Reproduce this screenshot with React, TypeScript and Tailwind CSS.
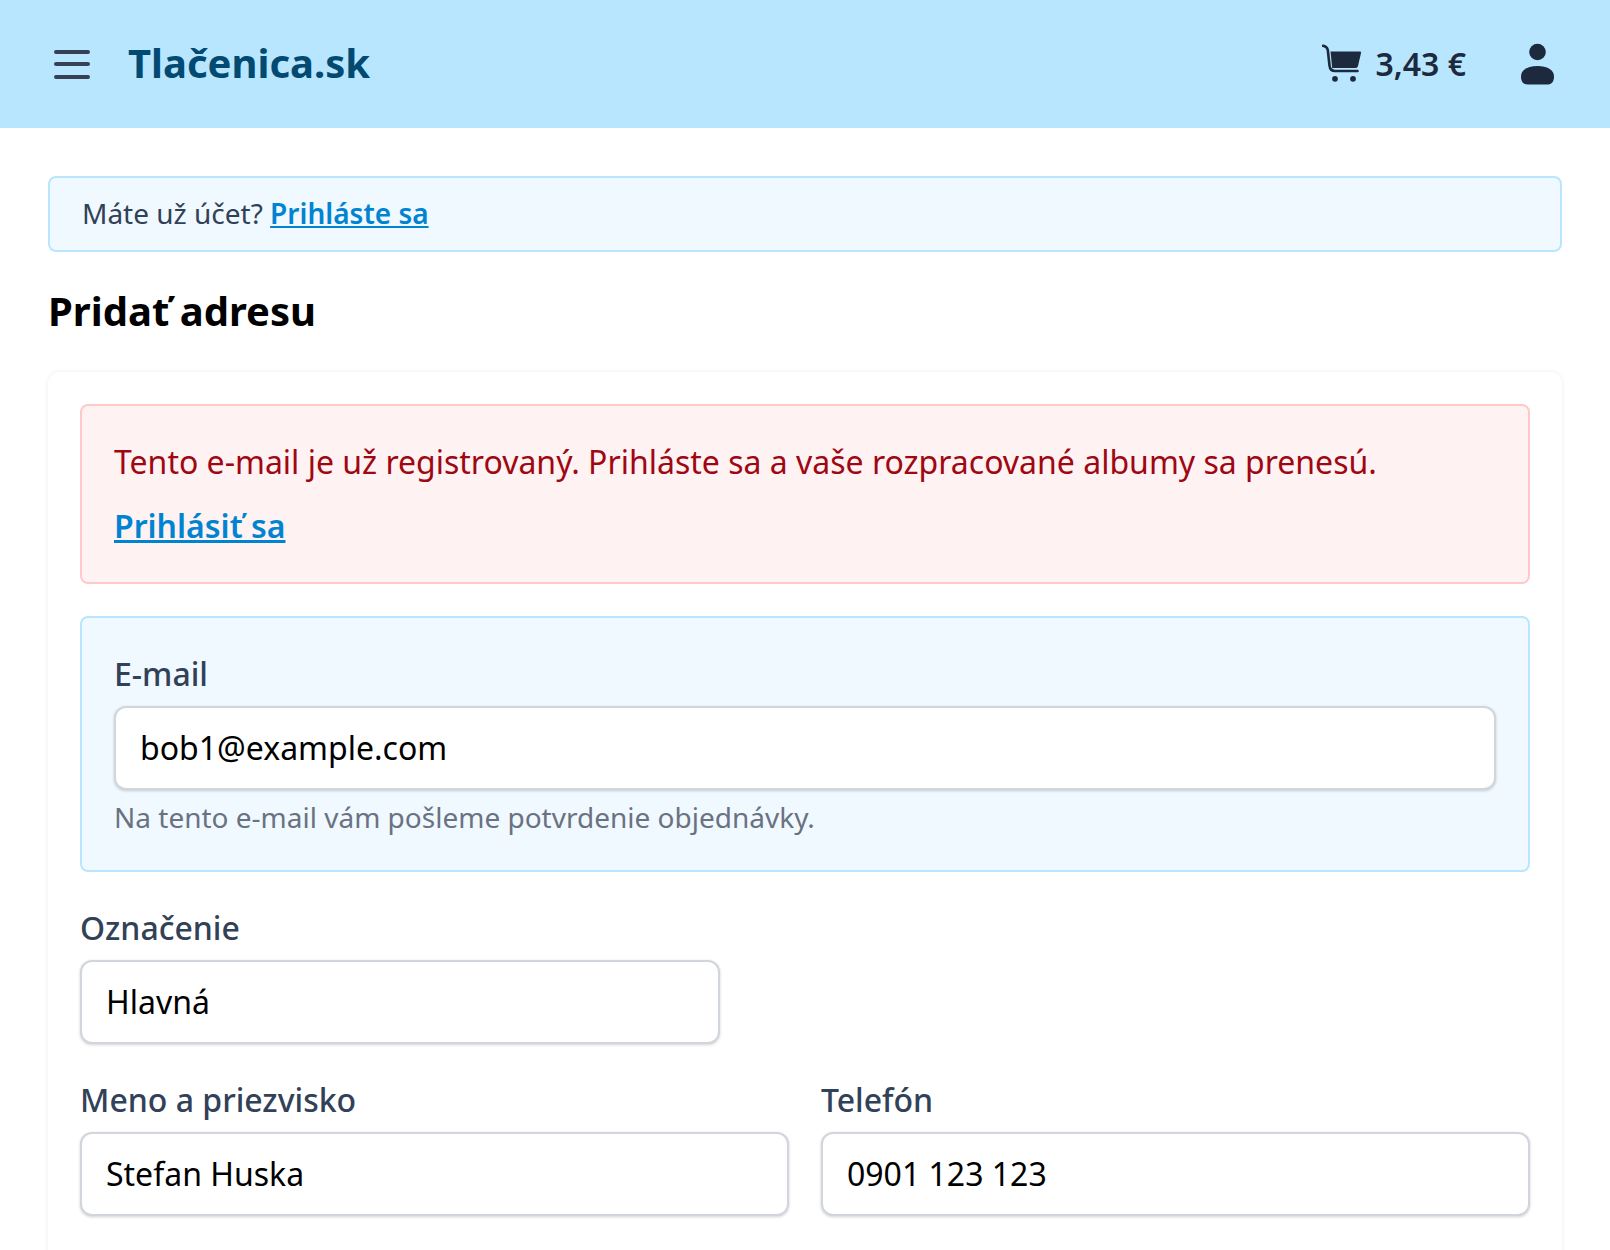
import React from 'react';

const CartIcon = () => (
  <svg width="40" height="40" viewBox="0 0 40 40" className="text-slate-800">
    <path d="M1 1.800c2.800.4 4.300 1.800 4.800 4.200l1.700 15.500c.4 3.500 2.200 5.500 5.500 5.500h22.500" fill="none" stroke="currentColor" strokeWidth="2.600" strokeLinecap="round" />
    <path d="M8.500 7.500h29.300c1 0 1.400.6 1.200 1.600l-3 13c-.3 1.200-1 1.800-2.200 1.800H10.200z" fill="currentColor" />
    <circle cx="13" cy="34.800" r="2.900" fill="currentColor" />
    <circle cx="31" cy="34.800" r="2.900" fill="currentColor" />
  </svg>
);

const UserIcon = () => (
  <svg width="33" height="42" viewBox="0 0 33 42" className="text-slate-800">
    <circle cx="16.500" cy="9" r="8.300" fill="currentColor" />
    <path d="M16.500 23c9.500 0 16.500 3.800 16.500 10.500 0 5.500-2.500 8-7 8H7c-4.500 0-7-2.500-7-8C0 26.800 7 23 16.500 23z" fill="currentColor" />
  </svg>
);

const Field = ({ label, value, className = '' }: { label: string; value: string; className?: string }) => (
  <div className={className}>
    <label className="block text-[32px] leading-[48px] font-medium text-slate-700 mb-2">{label}</label>
    <div className="h-[84px] flex items-center px-6 bg-white border-2 border-gray-300 rounded-[12px] shadow-[0_1px_3px_rgba(0,0,0,0.18)] text-[32px] text-black">
      {value}
    </div>
  </div>
);

export default function App() {
  return (
    <div className="h-[1250px] overflow-hidden bg-white font-['Noto_Sans',sans-serif]">
      <header className="h-32 bg-sky-200 flex items-center pl-[54px] pr-14">
        <div className="w-9 flex flex-col gap-[8.500px]">
          <span className="block h-1 rounded-full bg-gray-700" />
          <span className="block h-1 rounded-full bg-gray-700" />
          <span className="block h-1 rounded-full bg-gray-700" />
        </div>
        <a className="ml-[38px] mb-[3px] text-[40px] leading-none font-bold text-sky-900">Tlačenica.sk</a>
        <div className="ml-auto flex items-center gap-[14px]">
          <CartIcon />
          <span className="mb-[1px] text-[32px] font-semibold text-slate-800">3,43 €</span>
        </div>
        <div className="ml-[55px]">
          <UserIcon />
        </div>
      </header>

      <main className="px-12 pt-12">
        <div className="h-[76px] flex items-center px-8 pb-[2px] bg-sky-50 border-2 border-sky-200 rounded-[8px] text-[28px] text-slate-700">
          <span>Máte už účet?&nbsp;</span>
          <a className="font-semibold text-sky-600 underline">Prihláste sa</a>
        </div>

        <h1 className="mt-[31px] text-[40px] leading-[56px] font-bold text-black">Pridať adresu</h1>

        <section className="mt-[33px] bg-white rounded-[12px] shadow-[0_0_5px_rgba(0,0,0,0.08)] p-8 pb-[200px]">
          <div className="h-[180px] px-8 pt-8 bg-red-50 border-2 border-red-200 rounded-[8px]">
            <p className="text-[32px] leading-[48px] text-red-800">
              Tento e-mail je už registrovaný. Prihláste sa a vaše rozpracované albumy sa prenesú.
            </p>
            <a className="block mt-4 text-[32px] leading-[48px] font-semibold text-sky-600 underline">Prihlásiť sa</a>
          </div>

          <div className="mt-8 p-8 bg-sky-50 border-2 border-sky-200 rounded-[8px]">
            <Field label="E-mail" value="bob1@example.com" />
            <p className="mt-[6px] text-[28px] leading-[42px] text-gray-500">Na tento e-mail vám pošleme potvrdenie objednávky.</p>
          </div>

          <Field label="Označenie" value="Hlavná" className="mt-8 w-[640px]" />

          <div className="mt-8 grid grid-cols-2 gap-8">
            <Field label="Meno a priezvisko" value="Stefan Huska" />
            <Field label="Telefón" value="0901 123 123" />
          </div>
        </section>
      </main>
    </div>
  );
}
